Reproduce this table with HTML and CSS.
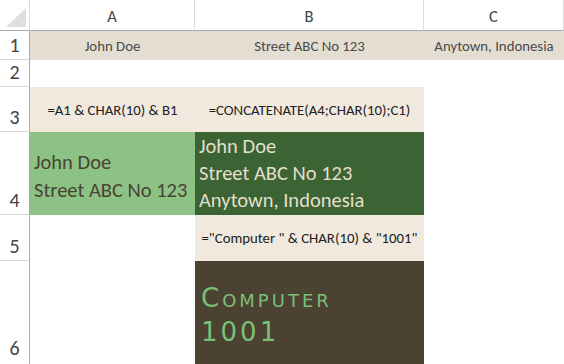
FILE: index.html
```html
<!DOCTYPE html>
<html lang="en">
<head>
  <meta charset="UTF-8" />
  <title>CHAR(10) line breaks</title>
  <link rel="stylesheet" href="styles.css">
</head>
<body>
  <div class="sheet">
    <!-- column headers -->
    <div class="corner"><span class="tri"></span></div>
    <div class="colhead">A</div>
    <div class="colhead">B</div>
    <div class="colhead">C</div>

    <!-- row 1 -->
    <div class="rowhead">1</div>
    <div class="cell tan center">John Doe</div>
    <div class="cell tan center">Street ABC No 123</div>
    <div class="cell tan center">Anytown, Indonesia</div>

    <!-- row 2 -->
    <div class="rowhead">2</div>
    <div class="cell"></div>
    <div class="cell"></div>
    <div class="cell"></div>

    <!-- row 3 -->
    <div class="rowhead">3</div>
    <div class="cell cream center">=A1 &amp; CHAR(10) &amp; B1</div>
    <div class="cell cream center">=CONCATENATE(A4;CHAR(10);C1)</div>
    <div class="cell"></div>

    <!-- row 4 -->
    <div class="rowhead">4</div>
    <div class="cell light-green wrap bottom">John Doe<br>Street ABC No 123</div>
    <div class="cell dark-green wrap">John Doe<br>Street ABC No 123<br>Anytown, Indonesia</div>
    <div class="cell"></div>

    <!-- row 5 -->
    <div class="rowhead">5</div>
    <div class="cell"></div>
    <div class="cell cream center">="Computer " &amp; CHAR(10) &amp; "1001"</div>
    <div class="cell"></div>

    <!-- row 6 -->
    <div class="rowhead last">6</div>
    <div class="cell"></div>
    <div class="cell brown caps">Computer<br>1001</div>
    <div class="cell"></div>
  </div>
</body>
</html>
```

FILE: styles.css
```css
body {
  margin: 0;
  background: #fff;
  overflow: hidden;
  font-family: Carlito, Lato, "Open Sans", sans-serif;
}

.sheet {
  display: grid;
  grid-template-columns: 30px 165px 229px 140px;
  grid-template-rows: 31px 29px 27px 45px 83px 46px 103px;
  width: 564px;
  height: 364px;
}

.corner {
  position: relative;
  border-right: 1px solid #dcdcdc;
  border-bottom: 1px solid #ababab;
}
.corner .tri {
  position: absolute;
  left: 6px;
  top: 8px;
  width: 0;
  height: 0;
  border-left: 20px solid transparent;
  border-bottom: 19px solid #dfdfdf;
}

.colhead {
  display: flex;
  align-items: center;
  justify-content: center;
  font-size: 16.5px;
  color: #444;
  border-right: 1px solid #dcdcdc;
  border-bottom: 1px solid #ababab;
  padding-top: 2px;
  box-sizing: border-box;
}

.rowhead {
  display: flex;
  align-items: flex-end;
  justify-content: center;
  font-size: 20px;
  color: #444;
  line-height: 1;
  padding-bottom: 4px;
  box-sizing: border-box;
  border-right: 1px solid #ababab;
  border-bottom: 1px solid #dadada;
}
.rowhead.last {
  border-bottom: none;
  padding-bottom: 6px;
}

.cell {
  font-size: 14.8px;
  color: #333;
  overflow: hidden;
  white-space: nowrap;
}
.center {
  display: flex;
  align-items: center;
  justify-content: center;
}

.tan { background: #e4ded2; color: #4a4a4a; }
.cream { background: #f1e9dd; color: #222; }

.wrap {
  font-size: 20.5px;
  line-height: 27.5px;
  padding-left: 4px;
}
.light-green {
  background: #8cc284;
  color: #4a4233;
}
.bottom {
  display: flex;
  align-items: flex-end;
  padding-bottom: 11px;
  box-sizing: border-box;
}
.dark-green {
  background: #3b6333;
  color: #e4dfcd;
  padding-top: 1px;
  line-height: 27px;
}

.brown {
  background: #4b4231;
  color: #7cbf79;
}
.caps {
  font-family: "DejaVu Sans", sans-serif;
  font-variant: small-caps;
  font-size: 26px;
  letter-spacing: 3px;
  line-height: 34px;
  padding: 20px 0 0 6px;
}
```
